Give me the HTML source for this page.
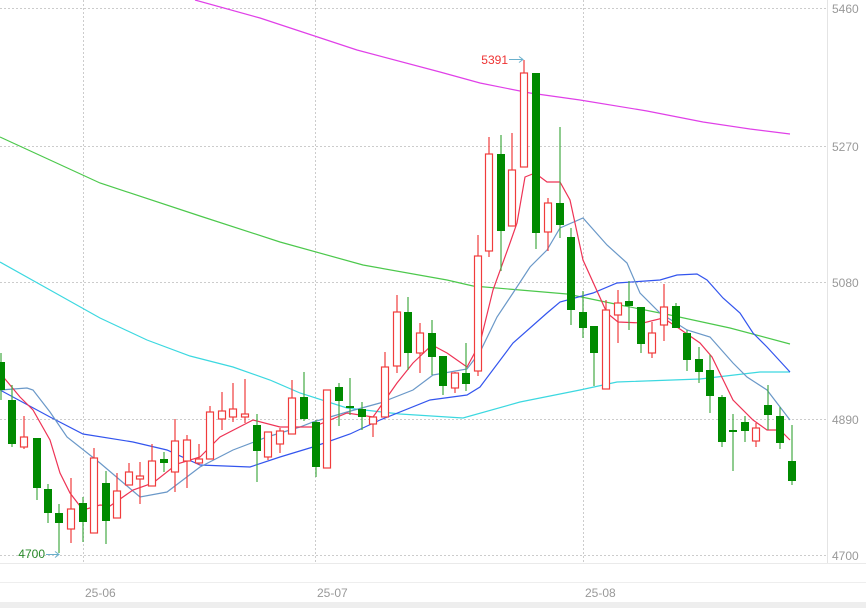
<!DOCTYPE html>
<html><head><meta charset="utf-8"><style>
html,body{margin:0;padding:0;background:#fff;width:866px;height:608px;overflow:hidden}
svg{display:block;font-family:"Liberation Sans",sans-serif}
</style></head><body>
<svg width="866" height="608" viewBox="0 0 866 608" xmlns="http://www.w3.org/2000/svg">
<rect width="866" height="608" fill="#fff"/>
<g stroke="#ccc" stroke-dasharray="2,2" stroke-width="1">
<line x1="0" y1="8.5" x2="827" y2="8.5"/>
<line x1="0" y1="146.5" x2="827" y2="146.5"/>
<line x1="0" y1="282.5" x2="827" y2="282.5"/>
<line x1="0" y1="419.5" x2="827" y2="419.5"/>
<line x1="0" y1="555.5" x2="827" y2="555.5"/>
<line x1="83.5" y1="0" x2="83.5" y2="563"/>
<line x1="315.5" y1="0" x2="315.5" y2="563"/>
<line x1="583.5" y1="0" x2="583.5" y2="563"/>
</g>
<line x1="827.5" y1="0" x2="827.5" y2="563" stroke="#e4e4e4"/>
<line x1="0" y1="563.5" x2="866" y2="563.5" stroke="#eaeaea"/>
<line x1="0" y1="582.5" x2="866" y2="582.5" stroke="#eee"/>
<rect x="0" y="602" width="866" height="6" fill="#eee"/>
<g fill="#999" font-size="12">
<text x="832" y="13">5460</text>
<text x="832" y="151">5270</text>
<text x="832" y="287">5080</text>
<text x="832" y="424">4890</text>
<text x="832" y="560">4700</text>
<text x="85" y="597">25-06</text>
<text x="317" y="597">25-07</text>
<text x="585" y="597">25-08</text>
</g>
<!-- MAs -->
<g fill="none" stroke-width="1.2">
<polyline stroke="#e040e8" points="195,0 260,18 357,50 440,72 480,83 530,93 580,100 647,111 703,122 750,129 790,134"/>
<polyline stroke="#4cc84c" points="0,137 50,160 100,183 200,216 280,242 363,265 447,280 473,286 520,290 567,294 620,305 670,315 730,328 790,344"/>
<polyline stroke="#3cd8e0" points="0,262 50,290 100,318 147,340 190,356 233,367 270,380 300,393 347,408 400,414 463,418 520,402 580,390 617,382 700,379 760,372 790,372"/>
<polyline stroke="#3355ee" points="0,390 50,417 83,434 133,442 167,450 200,465 250,467 280,457 313,447 350,434 380,420 430,400 467,395 480,387 513,343 547,313 560,302 593,293 617,283 660,280 677,275 697,274 707,280 723,298 740,313 753,333 767,347 790,372"/>
<polyline stroke="#6a98c8" points="0,390 27,388 33,390 50,412 67,437 100,463 140,497 167,492 200,467 233,450 267,437 300,427 313,422 347,412 380,403 413,390 433,375 467,369 480,352 497,317 513,293 530,267 547,250 560,228 583,218 607,245 627,263 640,293 660,313 687,330 710,337 733,363 747,377 767,390 790,420"/>
<polyline stroke="#ee3355" points="0,373 20,397 33,410 50,440 60,473 70,493 83,510 100,505 110,506 133,490 153,483 177,464 200,457 220,437 253,420 280,427 313,427 347,413 373,417 383,403 397,383 413,363 432,345 447,353 467,367 480,343 493,290 510,243 517,223 525,177 535,173 547,182 560,182 570,200 583,260 607,313 618,322 643,323 663,318 677,327 700,343 712,357 733,400 753,420 767,430 780,430 790,440"/>
</g>
<!-- candles -->
<g id="c" stroke-width="1.2">
<g stroke="#44aa44"><line x1="1" y1="353" x2="1" y2="400"/><line x1="12" y1="385" x2="12" y2="447"/><line x1="37" y1="438" x2="37" y2="500"/><line x1="48" y1="484" x2="48" y2="523"/><line x1="59" y1="504" x2="59" y2="553"/><line x1="83" y1="497" x2="83" y2="542"/><line x1="106" y1="471" x2="106" y2="544"/><line x1="164" y1="452" x2="164" y2="472"/><line x1="257" y1="414" x2="257" y2="482"/><line x1="304" y1="372" x2="304" y2="421"/><line x1="316" y1="420" x2="316" y2="477"/><line x1="339" y1="383" x2="339" y2="426"/><line x1="350" y1="378" x2="350" y2="415"/><line x1="362" y1="402" x2="362" y2="430"/><line x1="408" y1="297" x2="408" y2="370"/><line x1="432" y1="320" x2="432" y2="375"/><line x1="443" y1="356" x2="443" y2="395"/><line x1="466" y1="343" x2="466" y2="391"/><line x1="501" y1="135" x2="501" y2="271"/><line x1="536" y1="73" x2="536" y2="249"/><line x1="560" y1="127" x2="560" y2="238"/><line x1="571" y1="228" x2="571" y2="325"/><line x1="583" y1="291" x2="583" y2="338"/><line x1="594" y1="326" x2="594" y2="386"/><line x1="629" y1="281" x2="629" y2="330"/><line x1="641" y1="307" x2="641" y2="353"/><line x1="676" y1="303" x2="676" y2="328"/><line x1="687" y1="330" x2="687" y2="371"/><line x1="699" y1="347" x2="699" y2="383"/><line x1="710" y1="355" x2="710" y2="413"/><line x1="722" y1="395" x2="722" y2="447"/><line x1="733" y1="414" x2="733" y2="471"/><line x1="745" y1="416" x2="745" y2="442"/><line x1="768" y1="385" x2="768" y2="430"/><line x1="780" y1="407" x2="780" y2="449"/><line x1="792" y1="425" x2="792" y2="485"/></g>
<g fill="#008a00"><rect x="-3" y="362" width="8" height="28"/><rect x="8" y="400" width="8" height="44"/><rect x="33" y="438" width="8" height="50"/><rect x="44" y="489" width="8" height="24"/><rect x="55" y="513" width="8" height="10"/><rect x="79" y="503" width="8" height="19"/><rect x="102" y="483" width="8" height="38"/><rect x="160" y="459" width="8" height="4"/><rect x="253" y="425" width="8" height="26"/><rect x="300" y="397" width="8" height="22"/><rect x="312" y="422" width="8" height="45"/><rect x="335" y="387" width="8" height="14"/><rect x="346" y="406" width="8" height="2"/><rect x="358" y="409" width="8" height="8"/><rect x="404" y="312" width="8" height="41"/><rect x="428" y="333" width="8" height="24"/><rect x="439" y="356" width="8" height="30"/><rect x="462" y="373" width="8" height="11"/><rect x="497" y="154" width="8" height="77"/><rect x="532" y="73" width="8" height="160"/><rect x="556" y="203" width="8" height="22"/><rect x="567" y="237" width="8" height="73"/><rect x="579" y="312" width="8" height="16"/><rect x="590" y="326" width="8" height="27"/><rect x="625" y="301" width="8" height="5"/><rect x="637" y="307" width="8" height="37"/><rect x="672" y="306" width="8" height="22"/><rect x="683" y="333" width="8" height="27"/><rect x="695" y="359" width="8" height="13"/><rect x="706" y="370" width="8" height="26"/><rect x="718" y="397" width="8" height="45"/><rect x="729" y="430" width="8" height="2"/><rect x="741" y="422" width="8" height="9"/><rect x="764" y="405" width="8" height="10"/><rect x="776" y="416" width="8" height="27"/><rect x="788" y="461" width="8" height="20"/></g>
<g stroke="#f03c3c"><line x1="24" y1="416" x2="24" y2="449"/><line x1="71" y1="478" x2="71" y2="543"/><line x1="94" y1="448" x2="94" y2="533"/><line x1="117" y1="473" x2="117" y2="518"/><line x1="129" y1="463" x2="129" y2="485"/><line x1="140" y1="462" x2="140" y2="504"/><line x1="152" y1="444" x2="152" y2="486"/><line x1="175" y1="419" x2="175" y2="492"/><line x1="187" y1="435" x2="187" y2="488"/><line x1="199" y1="444" x2="199" y2="465"/><line x1="210" y1="406" x2="210" y2="459"/><line x1="222" y1="392" x2="222" y2="430"/><line x1="233" y1="383" x2="233" y2="422"/><line x1="245" y1="379" x2="245" y2="423"/><line x1="268" y1="432" x2="268" y2="460"/><line x1="280" y1="428" x2="280" y2="453"/><line x1="292" y1="380" x2="292" y2="434"/><line x1="327" y1="390" x2="327" y2="468"/><line x1="373" y1="417" x2="373" y2="437"/><line x1="385" y1="352" x2="385" y2="417"/><line x1="397" y1="295" x2="397" y2="373"/><line x1="420" y1="323" x2="420" y2="373"/><line x1="455" y1="372" x2="455" y2="393"/><line x1="478" y1="235" x2="478" y2="376"/><line x1="489" y1="137" x2="489" y2="257"/><line x1="512" y1="133" x2="512" y2="226"/><line x1="524" y1="60" x2="524" y2="167"/><line x1="548" y1="198" x2="548" y2="251"/><line x1="606" y1="300" x2="606" y2="389"/><line x1="618" y1="290" x2="618" y2="343"/><line x1="652" y1="322" x2="652" y2="358"/><line x1="664" y1="284" x2="664" y2="341"/><line x1="756" y1="423" x2="756" y2="447"/></g>
<g fill="#fff" stroke="#f03c3c"><rect x="20.5" y="437" width="7" height="10"/><rect x="67.5" y="509" width="7" height="20"/><rect x="90.5" y="458" width="7" height="75"/><rect x="113.5" y="491" width="7" height="27"/><rect x="125.5" y="472" width="7" height="13"/><rect x="136.5" y="476" width="7" height="3"/><rect x="148.5" y="461" width="7" height="25"/><rect x="171.5" y="441" width="7" height="31"/><rect x="183.5" y="440" width="7" height="21"/><rect x="195.5" y="459" width="7" height="4"/><rect x="206.5" y="412" width="7" height="47"/><rect x="218.5" y="411" width="7" height="8"/><rect x="229.5" y="409" width="7" height="8"/><rect x="241.5" y="414" width="7" height="3"/><rect x="264.5" y="432" width="7" height="25"/><rect x="276.5" y="431" width="7" height="13"/><rect x="288.5" y="398" width="7" height="36"/><rect x="323.5" y="390" width="7" height="78"/><rect x="369.5" y="417" width="7" height="7"/><rect x="381.5" y="367" width="7" height="50"/><rect x="393.5" y="312" width="7" height="54"/><rect x="416.5" y="333" width="7" height="20"/><rect x="451.5" y="373" width="7" height="15"/><rect x="474.5" y="256" width="7" height="115"/><rect x="485.5" y="154" width="7" height="97"/><rect x="508.5" y="170" width="7" height="56"/><rect x="520.5" y="73" width="7" height="94"/><rect x="544.5" y="203" width="7" height="29"/><rect x="602.5" y="310" width="7" height="79"/><rect x="614.5" y="303" width="7" height="12"/><rect x="648.5" y="333" width="7" height="20"/><rect x="660.5" y="307" width="7" height="18"/><rect x="752.5" y="428" width="7" height="13"/></g>
</g>
<text x="508" y="64" font-size="12" fill="#e33" text-anchor="end">5391</text>
<g stroke="#6ab0cc" fill="none" stroke-width="1"><line x1="509" y1="59.5" x2="523" y2="59.5"/><polyline points="519,56.5 523,59.5 519,62.5"/></g>
<text x="45" y="558" font-size="12" fill="#2a8a2a" text-anchor="end">4700</text>
<g stroke="#6ab0cc" fill="none" stroke-width="1"><line x1="46" y1="554.5" x2="59" y2="554.5"/><polyline points="55,551.5 59,554.5 55,557.5"/></g>
</svg>
</body></html>
